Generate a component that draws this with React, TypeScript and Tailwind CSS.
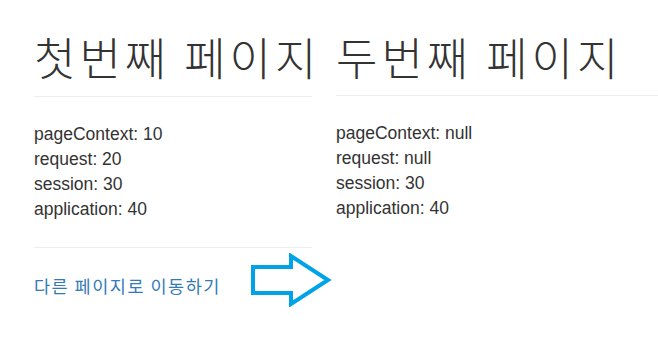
import React from "react";

const rows = {
  first: [
    ["pageContext", "10"],
    ["request", "20"],
    ["session", "30"],
    ["application", "40"],
  ],
  second: [
    ["pageContext", "null"],
    ["request", "null"],
    ["session", "30"],
    ["application", "40"],
  ],
};

function Values({ items }: { items: string[][] }) {
  return (
    <div className="mt-[25px] font-['Liberation_Sans',Arial,sans-serif] text-[17.5px] leading-[25px] text-[#333]">
      {items.map(([k, v]) => (
        <div key={k}>
          {k}: {v}
        </div>
      ))}
    </div>
  );
}

function Heading({ children }: { children: React.ReactNode }) {
  return (
    <h1 className="mt-[32px] mb-[14px] whitespace-nowrap font-['Noto_Sans_CJK_KR',sans-serif] text-[45px] font-light leading-[49.5px] tracking-[4px] text-[#333]">
      {children}
    </h1>
  );
}

export default function App() {
  return (
    <div className="relative flex h-[352px] w-[658px] overflow-hidden bg-white">
      {/* first page */}
      <div className="ml-[34px] w-[278px] shrink-0">
        <Heading>첫번째 페이지</Heading>
        <div className="h-px bg-[#eee]" />
        <Values items={rows.first} />
        <div className="mt-[25px] h-px bg-[#eee]" />
        <a
          href="#"
          className="mt-[25px] block font-['Noto_Sans_CJK_KR',sans-serif] text-[17.5px] leading-[25px] tracking-[1.5px] text-[#337ab7]"
        >
          다른 페이지로 이동하기
        </a>
      </div>

      {/* second page */}
      <div className="ml-[24px] flex-1">
        <Heading>두번째 페이지</Heading>
        <div className="-mt-px h-px bg-[#eee]" />
        <Values items={rows.second} />
      </div>

      {/* arrow */}
      <svg
        className="absolute left-[249px] top-[253px]"
        width="84"
        height="54"
        viewBox="0 0 84 54"
      >
        <path
          d="M4 14 H42 V3 L79 27 L42 51 V40 H4 Z"
          fill="none"
          stroke="#00a2e8"
          strokeWidth="4"
          strokeLinejoin="miter"
        />
      </svg>
    </div>
  );
}
